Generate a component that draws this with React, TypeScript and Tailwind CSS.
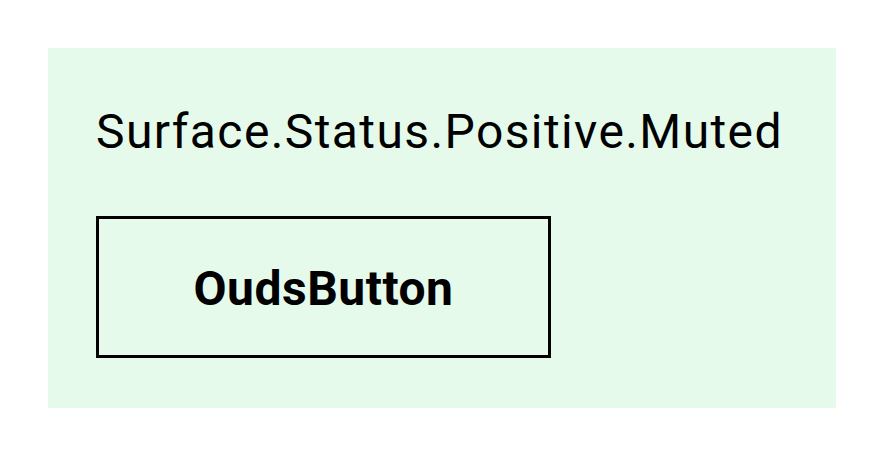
export default function App() {
  return (
    <div className="w-[884px] h-[456px] bg-white p-12" style={{ fontFamily: 'Roboto, sans-serif' }}>
      <div className="bg-[#e5faeb] p-12 flex flex-col gap-12 items-start h-[360px]">
        <p className="text-[48px] leading-[72px] tracking-[1.4px] text-black">Surface.Status.Positive.Muted</p>
        <button className="w-[455px] h-[142px] border-[3px] border-black flex items-center justify-center pt-[3px] text-[48px] font-bold tracking-[0.5px] text-black">
          OudsButton
        </button>
      </div>
    </div>
  )
}
